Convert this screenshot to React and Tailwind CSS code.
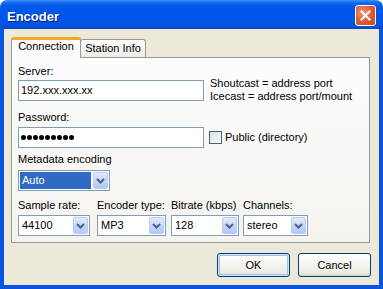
const txt = "font-['Liberation_Sans',Arial,sans-serif] text-[11px] leading-[13px] text-black";

function Chevron() {
  return (
    <svg width="9" height="6" viewBox="0 0 9 6">
      <path d="M1 1 L4.5 4.5 L8 1" fill="none" stroke="#4D6185" strokeWidth="2" />
    </svg>
  );
}

function Combo({ className, value, selected }) {
  return (
    <div className={`flex h-[21px] border border-[#7F9DB9] bg-white p-[1px] ${className}`}>
      <div className="flex-1 flex items-center pr-[2px]">
        <div className={`flex-1 h-full flex items-center pl-[2px] ${selected ? "bg-[#316AC5] text-white" : ""}`}>
          <span className={`${txt} ${selected ? "text-white" : ""}`}>{value}</span>
        </div>
      </div>
      <div className="w-[15px] rounded-[2px] border border-[#B8CBF4] bg-[linear-gradient(to_bottom,#e3ebfd_0%,#c6d6fa_50%,#b4c8f6_100%)] flex items-center justify-center">
        <Chevron />
      </div>
    </div>
  );
}

function Button({ label, def }) {
  return (
    <div
      className={`w-[73px] h-[24px] rounded-[3px] border border-[#003C74] bg-[linear-gradient(to_bottom,#ffffff_0%,#f5f5f1_45%,#ecebe3_85%,#d8d3c6_100%)] flex items-center justify-center ${
        def ? "shadow-[inset_0_0_0_1px_#cee7ff,inset_0_0_0_2px_#a0c0ee]" : ""
      }`}
    >
      <span className={txt}>{label}</span>
    </div>
  );
}

export default function App() {
  return (
    <div className="w-[383px] h-[289px] flex flex-col bg-white overflow-hidden">
      {/* Title bar */}
      <div className="h-[29px] shrink-0 rounded-t-[7px] flex items-start justify-between pl-[7px] pr-[7px] bg-[linear-gradient(to_bottom,#3d8ef8_0%,#1a6cf0_8%,#0058e8_20%,#0056e6_70%,#0050dc_92%,#0045c8_100%)]">
        <span className="mt-[9px] font-['Liberation_Sans',Arial,sans-serif] font-bold text-[13px] leading-[15px] text-white [text-shadow:1px_1px_0_#0a1883]">
          Encoder
        </span>
        <div className="mt-[5px] w-[21px] h-[21px] rounded-[3px] border border-white bg-[radial-gradient(circle_at_35%_35%,#f3977a_0%,#e0603a_45%,#c8441c_100%)] flex items-center justify-center">
          <svg width="11" height="11" viewBox="0 0 11 11">
            <path d="M1.5 1.5 L9.5 9.5 M9.5 1.5 L1.5 9.5" stroke="white" strokeWidth="2" strokeLinecap="square" />
          </svg>
        </div>
      </div>

      {/* Body */}
      <div className="flex-1 flex flex-col bg-[#ECE9D8] border-x-4 border-b-4 border-[#0A55E0] pt-[8px] pl-[7px]">
        {/* Tabs */}
        <div className="flex items-end h-[20px]">
          <div className="relative z-10 w-[70px] h-[21px] -mb-[1px] rounded-t-[3px] border-x border-[#919B9C] border-t-[3px] border-t-[#F5A623] bg-[#FCFCFE] flex justify-center">
            <span className={txt}>Connection</span>
          </div>
          <div className="-ml-[1px] w-[66px] h-[18px] rounded-t-[3px] border border-b-0 border-[#919B9C] bg-[linear-gradient(to_bottom,#ffffff,#ecebe6)] flex justify-center pt-[2px]">
            <span className={txt}>Station Info</span>
          </div>
        </div>

        {/* Panel */}
        <div className="w-[359px] h-[186px] border border-[#919B9C] bg-[linear-gradient(to_bottom,#fcfcfe,#f4f3ee)] pl-[6px] pt-[7px] flex flex-col">
          {/* Server */}
          <div className="flex items-start">
            <div className="flex flex-col">
              <span className={txt}>Server:</span>
              <div className="mt-[2px] w-[186px] h-[21px] border border-[#7F9DB9] bg-white pl-[2px] flex items-center">
                <span className={txt}>192.xxx.xxx.xx</span>
              </div>
            </div>
            <div className="ml-[6px] mt-[12px] flex flex-col">
              <span className={txt}>Shoutcast = address port</span>
              <span className={txt}>Icecast = address port/mount</span>
            </div>
          </div>

          {/* Password */}
          <div className="mt-[8px] flex items-end">
            <div className="flex flex-col">
              <span className={txt}>Password:</span>
              <div className="mt-[3px] w-[186px] h-[21px] border border-[#7F9DB9] bg-white pl-[2px] flex items-center gap-[1px]">
                {Array.from({ length: 9 }).map((_, i) => (
                  <div key={i} className="w-[5px] h-[5px] rounded-full bg-black" />
                ))}
              </div>
            </div>
            <div className="ml-[5px] h-[21px] flex items-center">
              <div className="w-[13px] h-[13px] border border-[#3E6186] bg-[linear-gradient(135deg,#dcdcd7,#ffffff)]" />
              <span className={`${txt} ml-[3px]`}>Public (directory)</span>
            </div>
          </div>

          {/* Metadata */}
          <div className="mt-[5px] flex flex-col">
            <span className={txt}>Metadata encoding</span>
            <Combo className="mt-[4px] w-[92px]" value="Auto" selected />
          </div>

          {/* Bottom combos */}
          <div className="mt-[8px] flex items-start">
            <div className="flex flex-col w-[72px]">
              <span className={txt}>Sample rate:</span>
              <Combo className="mt-[3px] w-[72px]" value="44100" />
            </div>
            <div className="ml-[7px] flex flex-col w-[69px]">
              <span className={`${txt} whitespace-nowrap`}>Encoder type:</span>
              <Combo className="mt-[3px] w-[69px]" value="MP3" />
            </div>
            <div className="ml-[5px] flex flex-col w-[68px]">
              <span className={`${txt} whitespace-nowrap`}>Bitrate (kbps)</span>
              <Combo className="mt-[3px] w-[68px]" value="128" />
            </div>
            <div className="ml-[4px] flex flex-col w-[65px]">
              <span className={txt}>Channels:</span>
              <Combo className="mt-[3px] w-[65px]" value="stereo" />
            </div>
          </div>
        </div>

        {/* Buttons */}
        <div className="mt-[10px] flex justify-end gap-[8px] pr-[8px]">
          <Button label="OK" def />
          <Button label="Cancel" />
        </div>
      </div>
    </div>
  );
}
